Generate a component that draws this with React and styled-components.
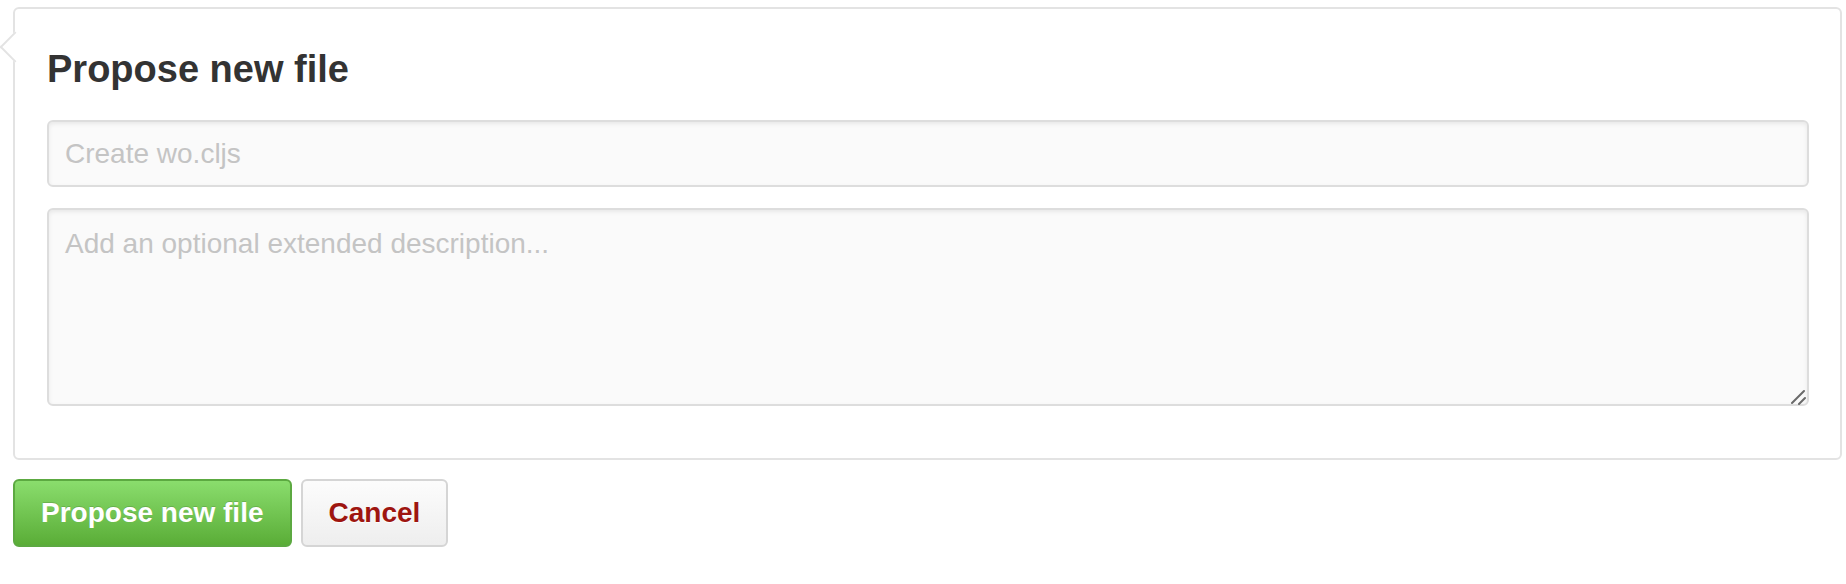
import styled, { createGlobalStyle } from "styled-components";

const GlobalStyle = createGlobalStyle`
  html, body {
    margin: 0;
    padding: 0;
    background: #fff;
  }
  body {
    font-family: "Liberation Sans", Arial, sans-serif;
    color: #333;
  }
  * {
    box-sizing: border-box;
  }
`;

const Page = styled.div`
  padding: 7px 4px 0 13px;
`;

const CommitForm = styled.div`
  position: relative;
  border: 2px solid #e3e3e3;
  border-radius: 6px;
  background: #fff;
  padding: 32px 31px 52px 32px;

  /* speech-bubble arrow on the left edge */
  &::before {
    content: "";
    position: absolute;
    top: 27px;
    left: -11px;
    width: 20px;
    height: 20px;
    background: #fff;
    border-left: 2px solid #e3e3e3;
    border-bottom: 2px solid #e3e3e3;
    transform: rotate(45deg);
  }
`;

const Title = styled.h3`
  margin: 4px 0 27px;
  font-size: 38px;
  line-height: 48px;
  font-weight: bold;
  color: #333;
`;

const fieldStyles = `
  display: block;
  width: 100%;
  font-family: "Liberation Sans", Arial, sans-serif;
  font-size: 28px;
  color: #333;
  background: #fafafa;
  border: 2px solid #ddd;
  border-radius: 6px;
  box-shadow: inset 0 2px 4px rgba(0, 0, 0, 0.075);
  outline: none;
  &::placeholder {
    color: #c4c4c4;
  }
`;

const SummaryInput = styled.input`
  ${fieldStyles}
  height: 67px;
  padding: 0 16px;
  line-height: 39px;
`;

const AreaWrap = styled.div`
  position: relative;
  margin-top: 21px;
`;

const DescriptionArea = styled.textarea`
  ${fieldStyles}
  height: 198px;
  padding: 14px 16px;
  line-height: 40px;
  resize: none;
`;

const Grip = styled.svg`
  position: absolute;
  right: 3px;
  bottom: 1px;
  width: 16px;
  height: 16px;
  pointer-events: none;
`;

const Actions = styled.div`
  display: flex;
  gap: 9px;
  margin-top: 19px;
`;

const Button = styled.button`
  height: 68px;
  padding: 0 26px;
  font-family: "Liberation Sans", Arial, sans-serif;
  font-size: 28px;
  font-weight: bold;
  line-height: 40px;
  border-radius: 6px;
  border: 2px solid ${(p) => (p.$primary ? "#5ca941" : "#d5d5d5")};
  color: ${(p) => (p.$primary ? "#fff" : "#9e1510")};
  background: ${(p) =>
    p.$primary
      ? "linear-gradient(#8add6d, #5aad37)"
      : "linear-gradient(#fcfcfc, #eeeeee)"};
  text-shadow: ${(p) =>
    p.$primary ? "0 -1px 0 rgba(0, 0, 0, 0.15)" : "0 1px 0 rgba(255, 255, 255, 0.9)"};
  cursor: pointer;
`;

export default function App() {
  return (
    <>
      <GlobalStyle />
      <Page>
        <CommitForm>
          <Title>Propose new file</Title>
          <SummaryInput type="text" placeholder="Create wo.cljs" />
          <AreaWrap>
            <DescriptionArea placeholder="Add an optional extended description..." />
            <Grip viewBox="0 0 16 16">
              <path
                d="M2 14 L14 2 M9 15 L15 9"
                stroke="#6a6a6a"
                strokeWidth="2"
                strokeLinecap="round"
                fill="none"
              />
            </Grip>
          </AreaWrap>
        </CommitForm>
        <Actions>
          <Button $primary>Propose new file</Button>
          <Button>Cancel</Button>
        </Actions>
      </Page>
    </>
  );
}
